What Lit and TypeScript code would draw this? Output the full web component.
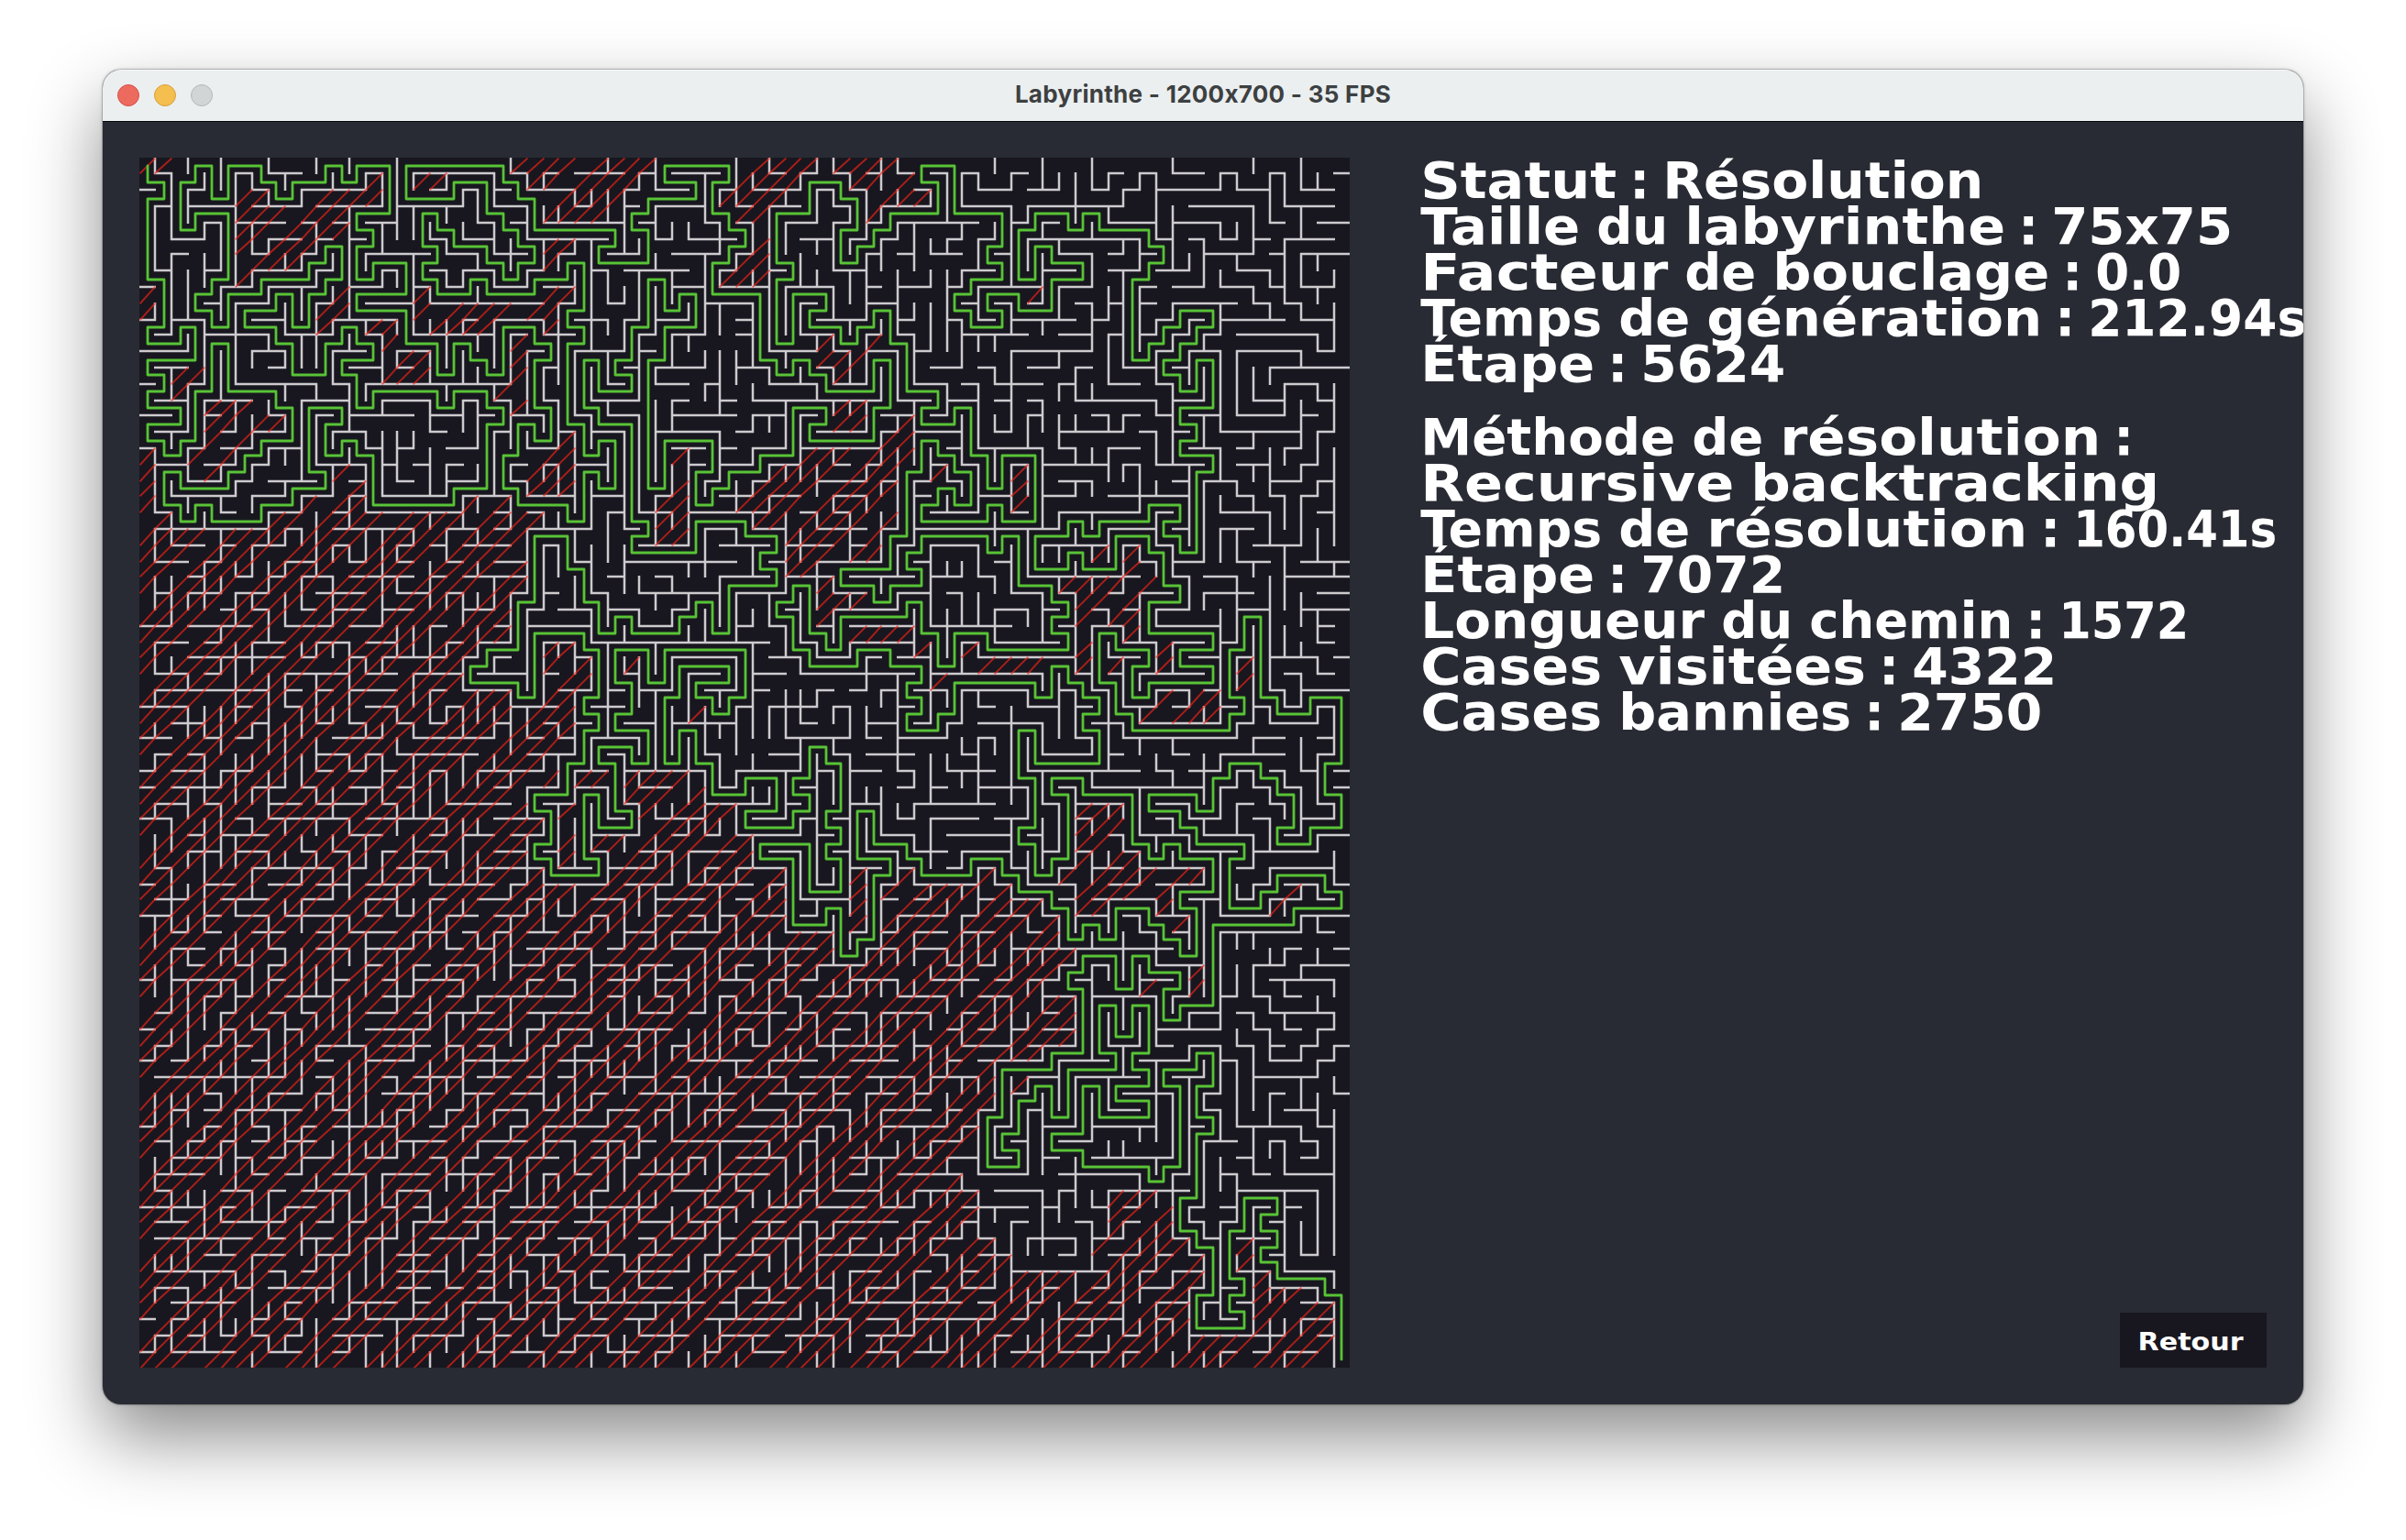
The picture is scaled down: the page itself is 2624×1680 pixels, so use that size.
import { LitElement, html, svg, css } from "lit";
import { customElement, property } from "lit/decorators.js";

const SIZE = 75;
const STEP = 8.8;

/** Turning points of the solution, alternately a row and a column, from cell (0, 0). */
const TURNS = `
1 1 2 0 7 1 10 0 11 2 10 3 12 0 13 1 14 0 15 2 16 0 17 1 18 2 17 3 14 4 11 5 14 8 15 9 17 7 18 6 19 5 20 2 19 1
21 2 22 3 21 4 22 7 21 9 20 11 19 10 15 12 16 11 18 12 17 13 18 14 21 19 20 21 16 22 15 21 14 19 15 18 14 14 15 13
13 12 12 14 11 13 10 12 11 11 13 9 11 8 10 6 9 8 8 9 10 10 8 11 7 12 5 11 6 10 7 7 8 5 10 4 9 3 8 4 7 5 3 3 4 2
1 3 0 4 2 5 0 7 1 8 2 9 1 11 0 12 1 13 0 15 3 13 4 14 5 13 7 14 6 16 8 13 9 16 11 18 13 19 11 20 12 21 13 22
10 24 11 25 12 24 15 25 17 24 16 23 18 22 20 23 21 26 22 27 19 28 20 29 17 28 18 27 16 26 11 27 10 26 9 27 6 26
7 24 8 21 7 20 8 18 7 17 6 18 5 17 3 18 4 19 5 21 6 22 7 23 6 24 5 23 4 22 3 21 1 19 2 16 0 22 1 23 2 24 4 29
5 28 6 31 4 30 3 31 2 34 1 32 0 36 1 35 3 36 4 37 5 36 6 35 8 38 12 39 13 40 12 41 13 42 14 45 12 46 15 45
17 41 16 42 15 40 18 38 19 36 20 35 21 34 19 35 17 32 20 31 12 32 10 34 8 33 9 32 7 31 10 30 12 29 13 30 14 28
12 27 15 28 16 30 22 31 23 30 24 34 22 37 23 39 24 38 25 39 26 36 29 35 27 34 28 33 29 30 28 29 29 28 27 27 25 26
23 24 27 23 30 21 31 20 32 23 33 24 29 27 30 28 33 27 34 28 35 27 37 26 39 24 40 25 42 24 43 25 44 28 43 27
39 28 41 30 40 29 37 28 36 30 37 31 35 29 34 30 32 29 30 31 32 32 30 37 33 36 34 35 33 34 32 36 31 33 33 32
37 33 35 34 37 35 39 37 38 39 40 37 41 40 40 41 39 40 38 41 36 42 37 43 40 42 41 43 42 42 43 43 45 41 42 38
43 40 47 42 46 43 49 44 48 45 44 46 43 44 40 45 42 47 43 48 44 51 43 53 44 54 45 56 46 57 48 58 47 59 48 60
46 62 47 63 48 64 49 65 46 64 45 66 43 64 42 63 43 62 42 61 39 58 38 56 39 57 43 56 44 55 42 54 41 55 38 54
35 55 37 59 35 58 34 59 33 58 32 57 31 56 33 55 32 50 34 49 35 47 34 48 33 47 32 48 31 46 30 44 31 41 30 40
28 39 27 40 26 41 29 42 30 43 28 47 27 48 29 49 31 50 29 52 30 57 29 56 28 57 27 56 26 54 23 53 24 52 23 48
24 47 25 48 26 46 27 45 26 43 25 46 23 47 19 48 17 49 18 50 19 51 21 50 20 49 21 48 22 52 21 53 22 55 18 53
20 52 18 51 15 50 16 48 15 49 14 47 11 46 9 45 10 44 11 43 10 41 9 42 8 40 11 39 7 40 6 39 3 41 1 43 2 44
4 43 6 44 5 45 4 46 3 49 1 48 0 50 3 53 5 52 6 53 7 51 8 50 9 51 10 53 9 52 8 54 9 56 7 58 6 56 5 55 7 54
4 55 3 57 4 58 3 59 4 62 5 63 6 62 7 61 12 62 11 63 10 64 9 66 10 65 11 64 12 63 13 64 14 65 12 66 15 64
16 65 17 64 18 66 19 65 24 64 23 63 22 64 21 62 22 59 23 58 22 57 23 55 25 57 24 58 25 60 23 62 24 63 26 64
27 62 29 66 30 64 31 66 32 62 33 61 31 62 30 60 29 59 32 60 34 61 35 67 34 68 33 67 30 68 28 69 33 70 34 72
33 74 37 73 39 74 41 72 42 70 41 71 39 70 38 69 37 67 38 66 40 65 39 62 40 64 41 65 42 68 43 67 46 69 45 70
44 73 45 74 46 71 47 66 52 64 53 63 51 64 50 62 49 61 51 60 49 58 50 57 51 58 55 56 56 53 59 52 62 54 61 53
60 54 58 55 57 56 59 57 56 60 55 59 52 60 54 61 52 62 55 61 56 62 57 60 58 62 59 59 57 58 60 56 61 58 62 62
63 63 62 64 57 63 56 65 55 66 57 65 59 66 60 65 64 64 66 65 67 66 70 65 72 68 71 67 70 68 69 67 66 68 64 70
65 69 66 70 67 69 68 70 69 73 70 74 74`;

/** Blocks of banned cells: first column, first row, last column, last row. */
const BANNED = `
0 0 2 0,6 1 6 1,14 1 14 1,6 2 8 3,10 2 14 2,9 3 12 4,6 4 10 5,6 6 9 6,6 7 6 7,0 8 0 9,11 8 12 10,14 10 15 10,
15 11 15 13,16 12 17 13,17 1 19 1,17 8 17 10,18 9 25 9,18 10 21 10,24 9 25 10,25 8 26 8,23 11 23 15,22 14 22 14,
2 13 3 13,2 14 2 14,4 15 7 16,8 16 8 16,4 17 6 17,3 18 5 18,3 19 4 19,0 18 0 22,1 22 1 22,12 19 13 20,10 21 13 21,
8 22 24 22,20 21 22 21,0 23 23 24,23 19 25 20,26 17 26 20,24 18 26 20,23 0 31 0,23 1 30 1,25 2 29 3,25 5 26 6,
37 0 41 0,37 1 40 1,36 2 39 2,37 3 38 3,38 4 38 5,37 6 38 6,36 7 38 7,43 0 46 0,44 1 47 1,46 2 48 2,45 2 45 3,
42 11 42 12,43 12 44 13,45 11 45 11,43 15 44 16,47 16 47 16,46 17 47 17,41 18 47 18,39 19 46 19,38 20 46 20,
37 21 46 21,38 22 46 22,40 23 45 24,40 25 41 25,42 26 42 28,43 27 44 27,33 18 33 23,32 21 32 23,49 19 49 19,
55 8 55 8,54 19 54 21,59 24 59 24,61 24 61 24,0 25 23 26,0 27 22 29,0 30 20 30,0 31 19 32,0 33 22 33,0 34 24 38,
25 30 26 38,27 31 27 32,0 39 23 44,24 41 24 41,26 40 26 43,27 38 28 38,30 38 34 39,31 40 36 40,31 41 36 41,
28 42 37 42,29 43 37 43,29 44 39 44,24 44 24 44,0 45 39 49,40 48 42 49,44 44 44 47,47 44 47 44,46 45 49 49,
45 49 45 49,52 44 52 45,50 45 53 49,54 46 55 49,56 47 56 49,57 49 57 49,51 30 51 30,51 31 55 31,61 25 62 26,
57 26 60 26,58 27 61 28,61 29 61 29,58 29 58 31,63 30 63 31,60 31 60 31,62 34 66 34,63 33 66 33,68 31 68 32,
58 40 60 42,58 43 61 43,57 44 65 44,58 45 63 45,58 46 59 46,63 46 63 46,64 47 64 47,71 45 71 45,70 46 70 46,
50 50 56 50,50 51 55 51,50 52 57 54,50 55 55 55,50 56 52 58,54 57 54 57,50 59 51 61,50 63 50 63,50 64 51 66,
50 67 52 67,50 68 53 68,50 69 65 69,60 64 63 66,59 67 64 67,59 68 65 68,50 70 64 73,65 73 68 73,50 74 73 74,
68 67 68 68,69 69 69 69,69 70 72 70,69 71 73 73,62 51 62 51,65 50 65 51,0 50 49 74,49 32 49 32,44 29 47 29,
48 30 48 30,30 31 30 31,34 34 34 34`;

/** Fixed walls of the unexplored zones, as polylines between grid corners. */
const FIXED = `
53 0 53 1,56 0 56 2,55 2 57 2 57 1,51 3 51 1 52 1 52 2 54 2 54 1 55 1,58 1 58 4,59 0 59 2 60 2 60 1 61 1,
61 2 62 2 62 1 63 1 63 3,61 2 61 3 55 3 55 4 54 4,51 3 54 3 54 8,60 3 60 4 63 4 63 5 64 5,62 3 62 4,64 3 64 7,
64 0 64 1 66 1,63 2 67 2 67 1 68 1 68 2 70 2,69 0 69 1,70 4 70 1 71 1 71 3 74 3,70 4 71 4,72 0 72 2 74 2,
73 1 73 2,74 1 75 1,65 3 69 3 69 6,64 4 67 4 67 5 68 5 68 4,69 5 70 5,73 4 75 4,72 3 72 5,71 9 71 5 74 5,
65 5 66 5 66 8 64 8,66 6 69 6,70 6 71 6,72 6 75 6,72 6 72 8 74 8 74 7,73 6 73 7,73 8 73 9,
68 6 68 7 70 7 70 8 71 8,63 8 63 7 65 7 65 6,67 7 67 8 69 8 69 9 70 9 70 10,63 9 68 9,67 9 67 11 66 11,
67 10 71 10,71 9 72 9 72 10 74 10,74 9 74 12 73 12 73 11 68 11,67 12 67 17 72 17,68 12 72 12 72 13,
68 12 68 16 71 16 71 14 73 14 73 15 74 15,69 13 69 15 71 15,70 14 70 13 75 13,
74 14 74 17 73 17 73 19 72 19 72 20 70 20,72 15 72 18 71 18 71 19,72 16 73 16,69 17 69 18 68 18,
70 18 70 21 71 21 71 23,68 19 70 19,69 19 69 20,67 18 67 20,65 18 67 18,66 20 68 20 68 21 69 21 69 22,
67 21 67 22 70 22 70 24,67 25 67 23 69 23,68 23 68 25,69 24 72 24 72 21 73 21 73 20 74 20,71 24 71 25,
74 18 74 24,73 22 74 22,73 23 73 25,68 25 70 25,72 25 75 25,
67 50 67 54,68 50 68 52 67 52,69 50 69 52 70 52 70 53 74 53 74 54 73 54 73 55 72 55 72 56 70 56 70 54 69 54 69 53 68 53,
69 50 71 50,72 51 72 50 75 50,70 51 74 51 74 52,71 51 71 52 72 52,73 52 73 53,71 53 71 54 72 54,70 55 71 55,
68 54 68 55 69 55 69 59,67 55 67 58 66 58,67 55 66 55,67 56 68 56 68 60 72 60 72 61 73 61 73 62 72 62,
75 55 74 55 74 56 73 56 73 57 69 57,72 57 72 59,71 59 73 59,73 58 73 60 74 60,74 59 74 68,70 60 70 58 71 58,
74 57 74 58 75 58,66 59 67 59 67 61,66 61 68 61,69 60 69 63 70 63,68 62 69 62,70 62 70 61 71 61 71 63 74 63,
67 62 67 65,67 63 68 63 68 66 67 66 67 72,68 64 73 64 73 68 72 68 72 66,71 64 71 69 74 69 74 70 75 70,
71 65 72 65,69 69 69 65 70 65,70 66 71 66,70 68 71 68`;

const inFixedZone = (x: number, y: number) =>
  (x >= 67 && y <= 24) || (x >= 64 && y <= 8) || (x >= 51 && y <= 2) ||
  (x >= 67 && y >= 50 && y <= 63) || (x >= 71 && y >= 64 && y <= 68);

const enum Kind { Free, Banned, Path }

interface Maze {
  walls: string;
  hatches: string;
  solution: string;
}

const at = (k: number) => Math.floor(k * STEP + 1e-6);
const mid = (k: number) => Math.floor((k + 0.5) * STEP + 1e-6) + 0.5;

function buildMaze(): Maze {
  const kind = new Uint8Array(SIZE * SIZE);
  for (const block of BANNED.trim().split(",")) {
    const [x0, y0, x1, y1] = block.trim().split(/\s+/).map(Number);
    for (let y = y0; y <= y1; y++) for (let x = x0; x <= x1; x++) kind[y * SIZE + x] = Kind.Banned;
  }

  const cells: number[] = [0];
  const corners: [number, number][] = [[0, 0]];
  let cx = 0;
  let cy = 0;
  TURNS.trim().split(/\s+/).map(Number).forEach((goal, i) => {
    const vertical = i % 2 === 0;
    while ((vertical ? cy : cx) !== goal) {
      if (vertical) cy += Math.sign(goal - cy);
      else cx += Math.sign(goal - cx);
      cells.push(cy * SIZE + cx);
    }
    corners.push([cx, cy]);
  });
  cells.forEach((c) => (kind[c] = Kind.Path));

  const parent = Array.from({ length: SIZE * SIZE }, (_, i) => i);
  const find = (a: number): number => {
    while (parent[a] !== a) a = parent[a] = parent[parent[a]];
    return a;
  };
  const open = new Set<number>();
  const join = (a: number, b: number) => {
    const ra = find(a);
    const rb = find(b);
    if (ra === rb) return;
    parent[ra] = rb;
    open.add(Math.min(a, b) * 2 + (Math.abs(a - b) === 1 ? 0 : 1));
  };
  for (let i = 1; i < cells.length; i++) join(cells[i - 1], cells[i]);

  let seed = 20231;
  const random = () => {
    seed = (Math.imul(seed, 1664525) + 1013904223) >>> 0;
    return seed / 4294967296;
  };
  const neighbours = (a: number) => {
    const x = a % SIZE;
    const out: number[] = [];
    if (x > 0) out.push(a - 1);
    if (x < SIZE - 1) out.push(a + 1);
    if (a >= SIZE) out.push(a - SIZE);
    if (a < SIZE * (SIZE - 1)) out.push(a + SIZE);
    return out;
  };

  // Short winding corridors first, then every remaining piece is joined at random.
  const used = new Set<number>();
  for (let n = 0; n < 2600; n++) {
    let here = Math.floor(random() * SIZE * SIZE);
    if (kind[here] === Kind.Path || used.has(here)) continue;
    used.add(here);
    const length = 2 + Math.floor(random() * 7);
    for (let s = 0; s < length; s++) {
      const free = neighbours(here).filter((b) => kind[b] === kind[here] && !used.has(b));
      if (!free.length) break;
      const next = free[Math.floor(random() * free.length)];
      join(here, next);
      used.add(next);
      here = next;
    }
  }

  const edges: [number, number, number][] = [];
  for (let a = 0; a < SIZE * SIZE; a++) {
    for (const b of neighbours(a)) {
      if (b < a) continue;
      let weight = random();
      if (kind[a] !== kind[b]) weight += kind[a] === Kind.Path || kind[b] === Kind.Path ? 0.75 : 3;
      edges.push([weight, a, b]);
    }
  }
  edges.sort((p, q) => p[0] - q[0]).forEach(([, a, b]) => join(a, b));

  // Walls are keyed by the cell on their left or above, like the openings.
  const fixed = new Set<number>();
  for (const line of FIXED.trim().split(",")) {
    const p = line.trim().split(/\s+/).map(Number);
    for (let i = 2; i < p.length; i += 2) {
      let [x, y] = [p[i - 2], p[i - 1]];
      const dx = Math.sign(p[i] - x);
      const dy = Math.sign(p[i + 1] - y);
      while (x !== p[i] || y !== p[i + 1]) {
        if (dx) fixed.add(((y - 1) * SIZE + Math.min(x, x + dx)) * 2 + 1);
        else fixed.add((Math.min(y, y + dy) * SIZE + x - 1) * 2);
        x += dx;
        y += dy;
      }
    }
  }
  const hasWall = (x: number, y: number, below: boolean) => {
    const key = (y * SIZE + x) * 2 + (below ? 1 : 0);
    const zone = inFixedZone(x, y) || (below ? inFixedZone(x, y + 1) : inFixedZone(x + 1, y));
    return zone ? fixed.has(key) : !open.has(key);
  };

  let walls = "";
  let hatches = "";
  for (let y = 0; y < SIZE; y++) {
    for (let x = 0; x < SIZE; x++) {
      const a = y * SIZE + x;
      if (x < SIZE - 1 && hasWall(x, y, false)) walls += `M${at(x + 1) + 0.5} ${at(y)}V${at(y + 1) + 1}`;
      if (y < SIZE - 1 && hasWall(x, y, true)) walls += `M${at(x)} ${at(y + 1) + 0.5}H${at(x + 1) + 1}`;
      if ((kind[a] === Kind.Banned || a === 0) && (x + y) % 5 !== 2) {
        hatches += `M${at(x) + 0.3} ${at(y + 1) + 0.7}L${at(x + 1) + 0.7} ${at(y) + 0.3}`;
      }
    }
  }
  const solution = "M" + corners.map(([x, y]) => `${mid(x)} ${mid(y)}`).join("L");
  return { walls, hatches, solution };
}

@customElement("maze-board")
class MazeBoard extends LitElement {
  static styles = css`
    :host { display: block; width: 1320px; height: 1320px; background: #18171f; flex: none; }
    .board { display: block; width: 100%; height: 100%; }
    .line { fill: none; }
    .wall { stroke: #cecbcf; stroke-width: 1.25; }
    .hatch { stroke: rgba(255, 34, 22, 0.64); stroke-width: 1; }
    .solution { stroke: #58c336; stroke-width: 1.4; stroke-linejoin: round; stroke-linecap: round; }
  `;
  private maze = buildMaze();

  render() {
    return html`<svg class="board" viewBox="0 0 660 660">
      <path class="line wall" d=${this.maze.walls}></path>
      <path class="line hatch" d=${this.maze.hatches}></path>
      <path class="line solution" d=${this.maze.solution}></path>
    </svg>`;
  }
}

/** Advance of a character, in grid units of the display face. */
const ADVANCE: Record<string, number> = {
  i: 2, ":": 2, ".": 2, " ": 2, l: 3, "1": 3, t: 4, T: 4, L: 4, m: 6, M: 6, v: 6,
};
const advance = (text: string) => [...text].reduce((sum, c) => sum + (ADVANCE[c] ?? 5), 0);

@customElement("pixel-line")
class PixelLine extends LitElement {
  static styles = css`
    :host { display: block; }
    .row { display: block; overflow: visible; }
    .glyphs { font-family: "DejaVu Sans", "Liberation Sans", sans-serif; font-weight: 700; fill: #fff; }
  `;
  @property() text = "";
  @property({ type: Number }) unit = 8;

  render() {
    const u = this.unit;
    let pen = 0;
    const words = this.text.split(" ").map((word) => {
      const x = pen * u;
      const length = (advance(word) - 1) * u;
      pen += advance(word) + 2;
      return word === ":"
        ? svg`<tspan x=${x - u * 0.85}>:</tspan>`
        : svg`<tspan x=${x - u * 0.35} textLength=${length + u * 0.75} lengthAdjust="spacingAndGlyphs">${word}</tspan>`;
    });
    return html`<svg class="row" width=${(pen - 3) * u} height=${u * 6.25}>
      ${svg`<text class="glyphs" y=${u * 5} font-size=${u * 6.85}>${words}</text>`}
    </svg>`;
  }
}

const GENERATION = [
  "Statut : Résolution",
  "Taille du labyrinthe : 75x75",
  "Facteur de bouclage : 0.0",
  "Temps de génération : 212.94s",
  "Étape : 5624",
];
const SOLVING = [
  "Méthode de résolution :",
  "Recursive backtracking",
  "Temps de résolution : 160.41s",
  "Étape : 7072",
  "Longueur du chemin : 1572",
  "Cases visitées : 4322",
  "Cases bannies : 2750",
];

@customElement("app-root")
class AppRoot extends LitElement {
  static styles = css`
    :host {
      display: flex; box-sizing: border-box; width: 2624px; height: 1680px;
      padding: 76px 112px 148px; background: #fff; overflow: hidden;
    }
    .window {
      display: flex; flex-direction: column; width: 2400px; height: 1456px;
      border-radius: 20px; overflow: hidden; background: #282b33;
      box-shadow: 0 0 0 1px rgba(0, 0, 0, 0.18), 0 0 4px rgba(0, 0, 0, 0.2), 0 36px 80px rgba(0, 0, 0, 0.46);
    }
    .titlebar {
      display: grid; grid-template-columns: 1fr auto 1fr; align-items: center; flex: none;
      box-sizing: border-box; height: 57px; padding: 0 16px 1px; background: #ebeff0;
      border-top: 1px solid #f8fafa; border-bottom: 1px solid #05060c;
    }
    .lights { display: flex; gap: 16px; }
    .light { box-sizing: border-box; width: 24px; height: 24px; border-radius: 50%; border: 1px solid; }
    .close { background: #ed6a5e; border-color: #d6514a; }
    .minimize { background: #f5bf4f; border-color: #d69f3c; }
    .zoom { background: #d1d5d6; border-color: #b2b6b7; }
    .title {
      font: 700 26px/32px Inter, "Liberation Sans", sans-serif; font-feature-settings: "calt" 0;
      color: #3d4041; white-space: nowrap; letter-spacing: 0.28px; padding-bottom: 2px;
    }
    .content { display: flex; flex: 1; gap: 80px; padding: 39px 40px 40px; min-height: 0; }
    .side { display: flex; flex-direction: column; flex: 1; min-width: 0; padding-top: 4px; }
    .group + .group { margin-top: 30px; }
    .back {
      display: flex; align-items: flex-start; box-sizing: border-box; width: 160px; height: 60px;
      margin: auto 0 0 auto; padding: 21px 21px; border: 0; background: #18171f; flex: none;
    }
  `;

  private lines(list: string[]) {
    return html`<div class="group">${list.map((text) => html`<pixel-line .text=${text}></pixel-line>`)}</div>`;
  }

  render() {
    return html`<main class="window">
      <header class="titlebar">
        <div class="lights">
          <span class="light close"></span><span class="light minimize"></span><span class="light zoom"></span>
        </div>
        <div class="title">Labyrinthe - 1200x700 - 35 FPS</div>
      </header>
      <section class="content">
        <maze-board></maze-board>
        <div class="side">
          ${this.lines(GENERATION)}${this.lines(SOLVING)}
          <button class="back"><pixel-line .text=${"Retour"} .unit=${4}></pixel-line></button>
        </div>
      </section>
    </main>`;
  }
}
